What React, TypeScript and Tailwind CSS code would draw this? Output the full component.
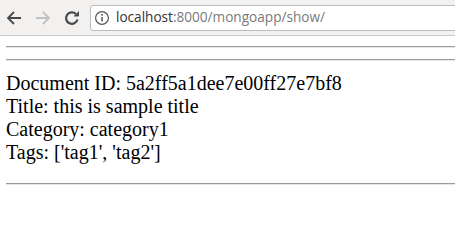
import * as React from 'react';

const Rule: React.FC = () => (
    <div className="h-[2px] border-t border-t-[#9b9b9b] border-b border-b-[#e6e6e6]" />
);

const App: React.FC = () => {
    return (
        <div className="w-[455px] h-[211px] overflow-hidden bg-white">
            {/* browser toolbar */}
            <div className="flex items-center h-[36px] bg-[#f2f1f0] border-b border-[#c9c9c9]">
                <div className="flex items-center gap-[13px] pl-[6px] pr-[10px]">
                    <svg width="16" height="16" viewBox="0 0 16 16" fill="none" stroke="#4a4a4a" strokeWidth="1.8">
                        <path d="M15 8H2M8 2L2 8l6 6" />
                    </svg>
                    <svg width="16" height="16" viewBox="0 0 16 16" fill="none" stroke="#c2c2c2" strokeWidth="1.8">
                        <path d="M1 8h13M8 2l6 6-6 6" />
                    </svg>
                    <svg width="16" height="16" viewBox="0 0 16 16" fill="none" stroke="#4a4a4a" strokeWidth="2.2">
                        <path d="M13.5 9.5A5.8 5.8 0 1 1 12 4" />
                        <path d="M14.5 1.5v4.5H10" fill="#4a4a4a" strokeWidth="1" />
                    </svg>
                </div>
                <div className="flex items-center gap-[6px] h-[26px] flex-1 -mr-4 bg-white border border-[#bdbdbd] rounded-[3px] pl-[3px] font-['Open_Sans',sans-serif] text-[13.6px]">
                    <svg width="16" height="16" viewBox="0 0 16 16" fill="none" stroke="#555" strokeWidth="1.2">
                        <circle cx="8" cy="8" r="6.4" />
                        <path d="M8 7v4.5" strokeWidth="1.5" />
                        <circle cx="8" cy="4.8" r="0.4" fill="#555" />
                    </svg>
                    <span>
                        <span className="text-[#333]">localhost</span>
                        <span className="text-[#7a7a7a]">:8000/mongoapp/show/</span>
                    </span>
                </div>
            </div>

            {/* page body */}
            <div className="pl-[6px] -mr-4 font-['Liberation_Serif',serif] text-[20px] leading-[23px] text-black">
                <div className="pt-[10px]">
                    <Rule />
                </div>
                <div className="pt-[11px]">
                    <Rule />
                </div>
                <div className="pt-[11px]">
                    <p>Document ID: 5a2ff5a1dee7e00ff27e7bf8</p>
                    <p>Title: this is sample title</p>
                    <p>Category: category1</p>
                    <p>Tags: ['tag1', 'tag2']</p>
                </div>
                <div className="pt-[19px]">
                    <Rule />
                </div>
            </div>
        </div>
    );
};

export default App;
